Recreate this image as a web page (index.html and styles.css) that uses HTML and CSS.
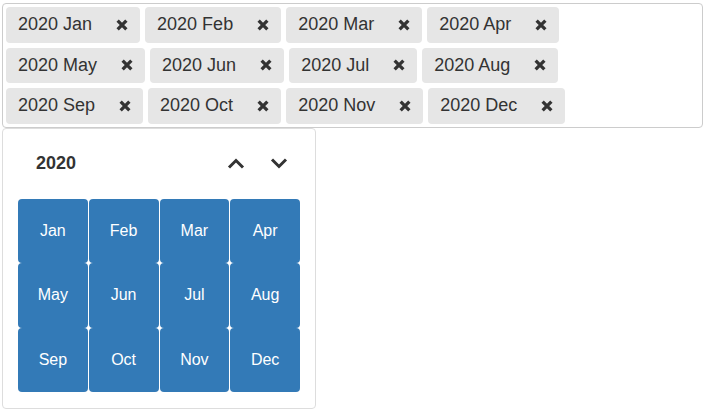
FILE: index.html
```html
<!DOCTYPE html>
<html lang="en">

<head>
    <meta charset="UTF-8">
    <meta name="viewport" content="width=device-width, initial-scale=1.0">
    <title>Month Picker</title>
    <link rel="stylesheet" href="styles.css">
</head>

<body>
    <div class="picker">
        <div class="tags">
            <span class="tag">2020 Jan<svg class="remove" viewBox="0 0 11 11"><path d="M1.5 1.5L9.5 9.5M9.5 1.5L1.5 9.5"/></svg></span>
            <span class="tag">2020 Feb<svg class="remove" viewBox="0 0 11 11"><path d="M1.5 1.5L9.5 9.5M9.5 1.5L1.5 9.5"/></svg></span>
            <span class="tag">2020 Mar<svg class="remove" viewBox="0 0 11 11"><path d="M1.5 1.5L9.5 9.5M9.5 1.5L1.5 9.5"/></svg></span>
            <span class="tag">2020 Apr<svg class="remove" viewBox="0 0 11 11"><path d="M1.5 1.5L9.5 9.5M9.5 1.5L1.5 9.5"/></svg></span>
            <span class="tag">2020 May<svg class="remove" viewBox="0 0 11 11"><path d="M1.5 1.5L9.5 9.5M9.5 1.5L1.5 9.5"/></svg></span>
            <span class="tag">2020 Jun<svg class="remove" viewBox="0 0 11 11"><path d="M1.5 1.5L9.5 9.5M9.5 1.5L1.5 9.5"/></svg></span>
            <span class="tag">2020 Jul<svg class="remove" viewBox="0 0 11 11"><path d="M1.5 1.5L9.5 9.5M9.5 1.5L1.5 9.5"/></svg></span>
            <span class="tag">2020 Aug<svg class="remove" viewBox="0 0 11 11"><path d="M1.5 1.5L9.5 9.5M9.5 1.5L1.5 9.5"/></svg></span>
            <span class="tag">2020 Sep<svg class="remove" viewBox="0 0 11 11"><path d="M1.5 1.5L9.5 9.5M9.5 1.5L1.5 9.5"/></svg></span>
            <span class="tag">2020 Oct<svg class="remove" viewBox="0 0 11 11"><path d="M1.5 1.5L9.5 9.5M9.5 1.5L1.5 9.5"/></svg></span>
            <span class="tag">2020 Nov<svg class="remove" viewBox="0 0 11 11"><path d="M1.5 1.5L9.5 9.5M9.5 1.5L1.5 9.5"/></svg></span>
            <span class="tag">2020 Dec<svg class="remove" viewBox="0 0 11 11"><path d="M1.5 1.5L9.5 9.5M9.5 1.5L1.5 9.5"/></svg></span>
        </div>

        <div class="dropdown">
            <div class="header">
                <span class="year">2020</span>
                <span class="nav">
                    <svg viewBox="0 0 18 11"><polyline points="2,9.5 9,2.5 16,9.5"/></svg>
                </span>
                <span class="nav">
                    <svg viewBox="0 0 18 11"><polyline points="2,1.5 9,8.5 16,1.5"/></svg>
                </span>
            </div>
            <div class="months">
                <div class="month">Jan</div>
                <div class="month">Feb</div>
                <div class="month">Mar</div>
                <div class="month">Apr</div>
                <div class="month">May</div>
                <div class="month">Jun</div>
                <div class="month">Jul</div>
                <div class="month">Aug</div>
                <div class="month">Sep</div>
                <div class="month">Oct</div>
                <div class="month">Nov</div>
                <div class="month">Dec</div>
            </div>
        </div>
    </div>
</body>

</html>
```

FILE: styles.css
```css
body {
    margin: 0;
    background-color: white;
    color: #333;
    font-family: "Liberation Sans", Arial, sans-serif;
}

.picker {
    margin: 3px 3px 0 2px;
}

.tags {
    display: flex;
    flex-wrap: wrap;
    gap: 5px;
    padding: 3px;
    border: 1px solid #ccc;
    border-radius: 4px;
}

.tag {
    display: inline-flex;
    align-items: center;
    height: 35.5px;
    padding: 0 12px 0 12px;
    background-color: #e6e6e6;
    border-radius: 4px;
    font-size: 18px;
    box-sizing: border-box;
}

.remove {
    width: 12px;
    height: 12px;
    margin-left: 24px;
    stroke: #333;
    stroke-width: 3;
    fill: none;
}

.dropdown {
    width: 282px;
    padding: 15px;
    border: 1px solid #ddd;
    border-radius: 4px;
}

.header {
    display: flex;
    align-items: center;
    height: 40px;
    margin-bottom: 15px;
}

.year {
    flex: 1;
    padding-left: 18px;
    font-size: 18px;
    font-weight: bold;
}

.nav {
    display: flex;
    justify-content: center;
    width: 43px;
}

.nav svg {
    width: 18px;
    height: 11px;
    stroke: #333;
    stroke-width: 3;
    fill: none;
}

.months {
    display: grid;
    grid-template-columns: repeat(4, 1fr);
    grid-template-rows: repeat(3, 1fr);
    column-gap: 1px;
    height: 194px;
}

.month {
    display: flex;
    align-items: center;
    justify-content: center;
    background-color: #337ab7;
    border-radius: 4px;
    color: white;
    font-size: 16px;
}
```
